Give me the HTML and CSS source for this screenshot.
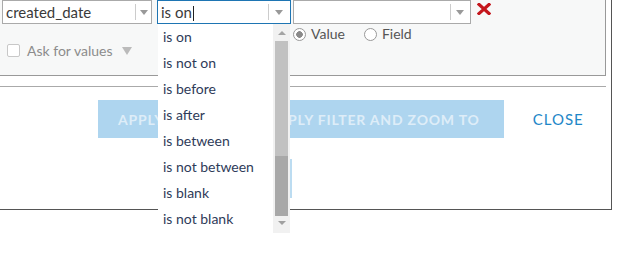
FILE: index.html
```html
<!DOCTYPE html>
<html lang="en">
<head>
    <meta charset="UTF-8">
    <meta name="viewport" content="width=device-width, initial-scale=1.0">
    <title>Filter</title>
    <link rel="stylesheet" href="styles.css">
</head>
<body>
    <div class="stage">
        <div class="dialog">
            <div class="filter-panel">
                <div class="expr-row">
                    <div class="select field-select">
                        <span class="select-value">created_date</span>
                        <span class="select-arrow"></span>
                    </div>
                    <div class="select op-select focused">
                        <span class="select-value">is on<span class="caret"></span></span>
                        <span class="select-arrow"></span>
                    </div>
                    <div class="select value-select">
                        <span class="select-value"></span>
                        <span class="select-arrow"></span>
                    </div>
                    <svg class="remove" width="14" height="12" viewBox="0 0 14 12">
                        <path d="M2 1.5 L12 10.5 M12 1.5 L2 10.5" stroke="#c4161c" stroke-width="3.2" stroke-linecap="square"/>
                    </svg>
                </div>
                <div class="expr-options">
                    <label class="ask">
                        <span class="checkbox"></span>
                        Ask for values
                        <span class="ask-arrow"></span>
                    </label>
                    <div class="radio-group">
                        <label class="radio checked"><span class="radio-dot"></span>Value</label>
                        <label class="radio"><span class="radio-dot"></span>Field</label>
                    </div>
                </div>
            </div>
            <div class="footer">
                <div class="actions">
                    <button class="btn btn-apply">APPLY FILTER</button>
                    <button class="btn btn-zoom">APPLY FILTER AND ZOOM TO</button>
                    <button class="btn-link">CLOSE</button>
                </div>
                <div class="hint"></div>
            </div>
        </div>

        <div class="op-list">
            <ul class="op-items">
                <li>is on</li>
                <li>is not on</li>
                <li>is before</li>
                <li>is after</li>
                <li>is between</li>
                <li>is not between</li>
                <li>is blank</li>
                <li>is not blank</li>
            </ul>
            <div class="scrollbar">
                <span class="scroll-up"></span>
                <div class="scroll-thumb">
                    <div class="thumb-top"></div>
                    <div class="thumb-hover"></div>
                </div>
                <span class="scroll-down"></span>
            </div>
        </div>
    </div>
</body>
</html>
```

FILE: styles.css
```css
body {
    margin: 0;
    background-color: white;
    font-family: 'Lato', 'Open Sans', sans-serif;
    font-size: 14px;
    color: #323232;
    overflow: hidden;
}
.stage {
    position: relative;
    display: flow-root;
    width: 644px;
    height: 254px;
}
.dialog {
    width: 611px;
    height: 219px;
    margin-top: -10px;
    background-color: white;
    border-right: 1px solid #555;
    border-bottom: 1px solid #555;
}
.filter-panel {
    box-sizing: border-box;
    width: 606px;
    height: 86px;
    padding-top: 10px;
    background-color: #f7f8f8;
    border-right: 1px solid #999;
    border-bottom: 1px solid #999;
}
.expr-row {
    display: flex;
    align-items: flex-start;
    padding-left: 2px;
}
.select {
    box-sizing: border-box;
    display: flex;
    align-items: center;
    height: 24px;
    background-color: white;
    border: 1px solid #aaa;
}
.select-value {
    flex: 1;
    padding-left: 3px;
    line-height: 22px;
    color: #3a3a3a;
    font-size: 15px;
    white-space: nowrap;
}
.select-arrow {
    position: relative;
    width: 15px;
    height: 16px;
    border-left: 1px solid #ccc;
}
.select-arrow::after {
    content: "";
    position: absolute;
    left: 4px;
    top: 6px;
    border-left: 4px solid transparent;
    border-right: 4px solid transparent;
    border-top: 5px solid #999;
}
.field-select {
    width: 150px;
}
.op-select {
    width: 134px;
    margin-left: 5px;
}
.op-select .select-arrow {
    width: 21px;
}
.op-select .select-arrow::after {
    left: 6px;
}
.focused {
    border-color: #1e75b3;
}
.caret {
    display: inline-block;
    width: 1px;
    height: 15px;
    margin-left: 1px;
    vertical-align: -3px;
    background-color: #222;
}
.value-select {
    width: 178px;
    margin-left: 2px;
}
.value-select .select-arrow {
    width: 19px;
}
.value-select .select-arrow::after {
    left: 5px;
}
.remove {
    margin-left: 6px;
    margin-top: 3px;
}
.expr-options {
    display: flex;
    align-items: flex-start;
}
.ask {
    display: flex;
    align-items: center;
    width: 286px;
    margin-top: 18px;
    padding-left: 7px;
    color: #8c8c8c;
    font-size: 14px;
}
.checkbox {
    box-sizing: border-box;
    width: 13px;
    height: 13px;
    margin-right: 7px;
    background-color: white;
    border: 1px solid #c8c8c8;
    border-radius: 2px;
}
.ask-arrow {
    margin-left: 9px;
    margin-top: 1px;
    border-left: 5px solid transparent;
    border-right: 5px solid transparent;
    border-top: 8px solid #bbb;
}
.radio-group {
    display: flex;
    margin-top: 3px;
}
.radio {
    display: flex;
    align-items: center;
    margin-right: 19px;
    color: #555;
    font-size: 14px;
    line-height: 14px;
}
.radio-dot {
    box-sizing: border-box;
    width: 13px;
    height: 13px;
    margin-right: 5px;
    background-color: white;
    border: 1px solid #999;
    border-radius: 50%;
}
.radio.checked .radio-dot {
    background: radial-gradient(circle, #8a8a8a 0, #8a8a8a 3px, white 3.6px);
}
.footer {
    width: 606px;
    height: 122px;
    margin-top: 10px;
    border-top: 1px solid #aaa;
}
.actions {
    display: flex;
    align-items: center;
    padding-top: 13px;
    padding-left: 98px;
}
.btn {
    height: 38px;
    padding: 0 20px;
    border: none;
    background-color: #aed5ef;
    color: #deedf8;
    font-family: 'Lato', 'Open Sans', sans-serif;
    font-size: 14px;
    font-weight: 700;
    letter-spacing: 0.8px;
}
.btn-zoom {
    margin-left: 12px;
    padding: 0 24px 0 20px;
}
.btn-link {
    margin-left: 29px;
    padding: 0;
    border: none;
    background: none;
    color: #1e87c8;
    font-family: 'Lato', 'Open Sans', sans-serif;
    font-size: 15px;
    letter-spacing: 1px;
}
.hint {
    width: 2px;
    height: 39px;
    margin-top: 21px;
    margin-left: 290px;
    background-color: #bcdcf1;
}
.op-list {
    position: absolute;
    left: 158px;
    top: 24px;
    display: flex;
    width: 132px;
    height: 209px;
    background-color: white;
}
.op-items {
    flex: 1;
    margin: 0;
    padding: 0;
    list-style: none;
}
.op-items li {
    height: 26px;
    padding-left: 5px;
    line-height: 26px;
    color: #2e3b59;
    font-size: 14px;
    white-space: nowrap;
}
.scrollbar {
    display: flex;
    flex-direction: column;
    align-items: center;
    width: 17px;
    background-color: #f1f1f1;
}
.scroll-up {
    margin-top: 7px;
    margin-bottom: 6px;
    border-left: 4px solid transparent;
    border-right: 4px solid transparent;
    border-bottom: 4px solid #a3a3a3;
}
.scroll-thumb {
    display: flex;
    flex-direction: column;
    width: 13px;
    height: 175px;
}
.thumb-top {
    height: 115px;
    background-color: #c1c1c1;
}
.thumb-hover {
    flex: 1;
    background-color: #a8a8a8;
}
.scroll-down {
    margin-top: 5px;
    border-left: 4px solid transparent;
    border-right: 4px solid transparent;
    border-top: 4px solid #a0a0a0;
}
```
